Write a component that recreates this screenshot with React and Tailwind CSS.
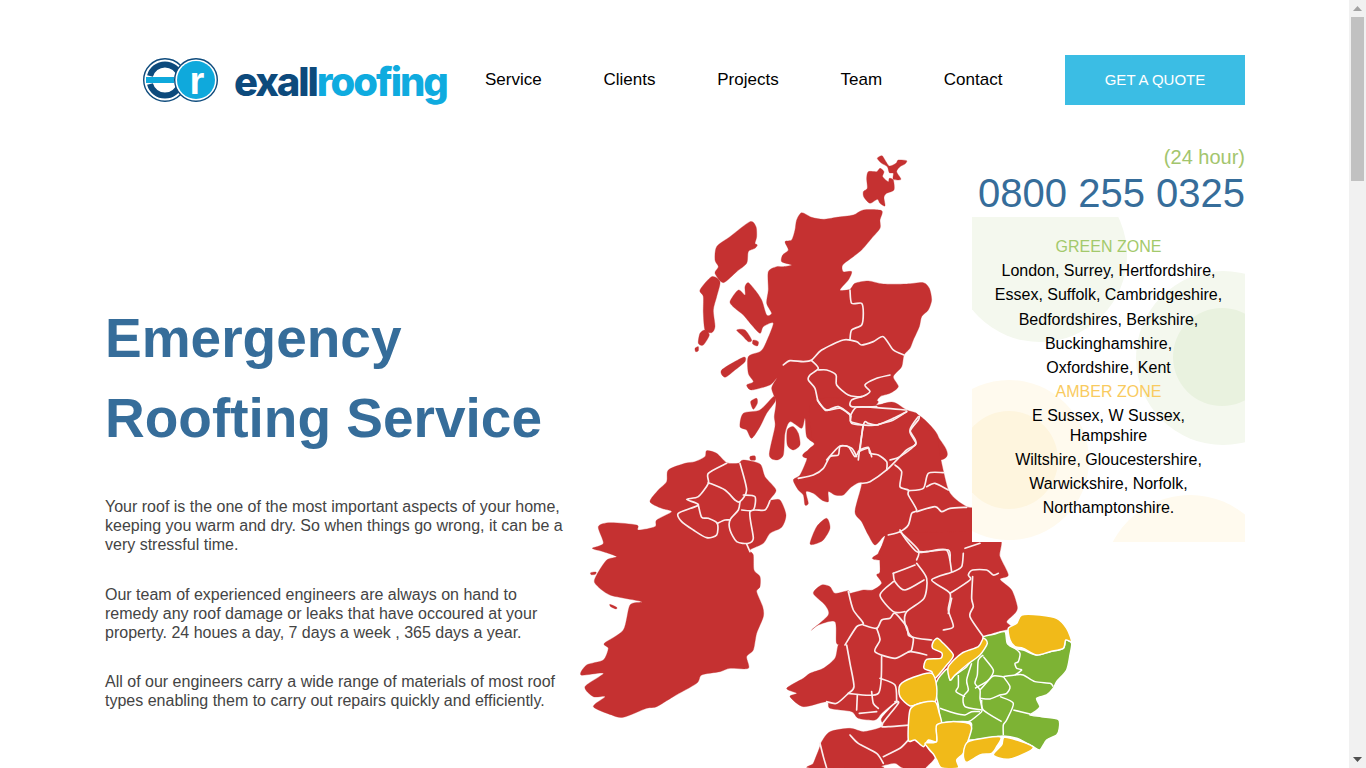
const z2 = {
  red: [
    "592,55 606,47 615,60 628,78 648,70 655,60 680,62 675,72 660,80 650,95 663,118 640,118 640,100 628,98 622,80 605,70",
    "565,95 590,95 600,85 612,95 608,110 625,125 628,115 640,120 642,150 620,160 612,172 615,198 600,190 592,178 570,190 552,172 550,155 562,145 560,115",
    "365,218 395,232 430,238 470,232 520,225 550,210 605,212 600,240 600,265 575,295 545,330 520,350 488,375 490,395 515,395 505,420 480,450 510,448 525,430 565,423 610,432 680,432 730,428 748,445 755,480 745,510 725,530 718,560 700,600 690,625 672,645 665,680 640,710 655,740 630,760 600,770 585,795 625,790 660,800 680,815 715,825 745,850 775,890 780,960 385,955 405,915 380,890 375,835 365,865 330,845 315,880 310,945 290,960 268,945 285,860 283,830 288,785 275,745 290,715 270,735 215,750 200,735 220,725 205,700 205,650 240,635 255,615 280,550 250,560 240,580 215,555 190,525 165,505 150,485 175,450 195,465 195,440 205,428 225,450 245,480 260,525 275,520 260,490 265,450 265,395 290,380 310,380 335,375 305,365 308,345 325,330 315,305 335,300 345,270 350,240",
    "110,320 150,290 210,245 228,260 230,290 225,310 232,315 225,325 205,335 200,370 170,395 130,428 105,400 115,380 105,360",
    "60,450 95,410 120,425 110,470 100,510 105,560 95,578 75,570 70,520 70,470",
    "60,580 75,570 88,585 70,615 55,610",
    "45,625 55,620 55,632 47,635",
    "170,570 195,570 215,600 205,605 185,585",
    "220,600 235,605 232,618 218,612",
    "125,690 190,652 195,665 165,690 135,712",
    "180,860 190,820 240,810 280,770 285,785 260,820 240,860 215,895 200,870",
    "212,785 230,775 232,790 220,808",
    "322,870 340,860 355,880 360,915 340,930 322,915",
  ],
  lines: [
    "510,450 515,490 545,490 550,520 545,555 515,570 510,600",
    "310,675 330,662 370,665 395,660 425,630 490,600 530,605 545,615 580,605 610,590 640,630 672,645",
    "395,662 415,685 390,705 385,720 405,745 415,785 440,810 480,805 510,825",
    "415,690 440,690 468,705 470,735 505,765 545,770 570,755 555,735 590,715 630,705",
    "545,770 515,780 515,800 590,800",
    "510,825 515,850 550,855 590,855 640,835 680,815",
    "550,855 540,920 535,960",
    "715,830 690,870 708,910 660,950 630,960",
    "440,960 480,918 515,925 530,950",
    "535,935 565,925 575,950",
  ],
};
const z7 = {
  red: [
    "95,105 100,0 285,0 285,20 320,8 345,8 380,30 410,40 420,60 440,85 470,110 478,150 485,190 505,270 530,300 560,320 600,340 600,480 295,480 295,460 310,430 322,405 310,410 285,435 265,405 245,365 225,335 245,250 215,260 190,285 165,285 145,275 145,305 125,300 100,280 78,275 85,310 75,315 70,285 55,270 40,240 60,225 80,180 85,150 105,130",
    "90,430 110,380 140,355 150,385 130,420 105,432",
  ],
  lines: [
    "55,235 100,225 130,205 150,170 175,165 180,140 205,140 225,170 240,150 265,142 270,160 295,165 320,185 320,210",
    "245,250 270,245 320,210 380,150 408,132 390,95 415,60 418,50",
    "240,150 248,85 255,65 265,70 290,75 300,72 340,60 380,35",
    "250,75 212,65 212,45 175,20 150,28 135,30 112,0",
    "212,45 230,22 280,22 380,30",
    "345,195 365,215 360,260 385,270 385,285 410,330 395,340 385,375 360,395 325,405",
    "385,272 430,265 445,220 490,218",
    "440,260 465,250 505,270",
    "410,335 465,320 485,335 510,325 560,322",
    "360,395 415,450 410,480",
    "415,455 440,455 505,450 510,480",
    "555,445 600,430",
  ],
};
const z4 = {
  red: [
    "320,10 640,10 660,80 685,135 660,148 695,180 712,230 705,250 680,275 692,295 610,330 560,500 400,520 350,515 340,520 305,550 285,570 235,565 215,545 150,535 140,515 70,530 30,500 50,490 20,475 70,445 90,430 130,415 165,385 175,345 195,345 170,340 165,275 115,285 95,300 145,255 135,225 100,190 125,165 150,170 165,190 205,182 210,190 250,180 278,180 305,160 290,135 300,125 300,70 315,20",
  ],
  lines: [
    "360,0 375,25 410,65 440,65 500,60 515,125",
    "550,70 545,110 520,125 455,150 510,190 505,240 520,290 490,300",
    "410,100 440,145 432,205 380,245 375,280 395,320 455,330",
    "340,130 405,105",
    "340,130 345,155 375,180 432,150",
    "340,155 300,195 340,245 375,245",
    "205,185 220,240 250,280 230,290 195,345",
    "250,285 290,295 305,270 330,265 345,250 380,290 385,315 400,325 395,360 385,365",
    "290,295 300,330 285,365 345,385 390,365 440,375",
    "200,345 210,400 222,470 205,490 170,520 140,515",
    "305,380 295,490 205,490",
    "300,445 345,465 350,515",
    "232,495 230,540",
    "275,485 280,520 295,535",
    "238,550 290,545",
    "345,515 355,520 305,585 325,590 390,585",
    "210,615 235,640 290,670 310,700",
    "310,680 360,655 385,630",
    "120,640 130,680 140,714",
    "510,190 570,150 565,135 578,120 620,120 640,135 655,130",
    "578,140 575,205 580,230 570,260 610,320",
    "515,205 505,250",
  ],
};
const z8 = {
  red: [
    "150,215 210,205 250,215 295,205 310,195 305,175 350,130 400,130 440,260 465,290 440,320 430,324 370,324 345,310 305,318 300,324 90,324 100,310 118,265 125,245",
  ],
};
const z3 = {
  red: [
    "410,32 440,40 470,68 505,70 520,60 570,72 585,110 618,150 600,180 630,180 648,225 635,262 600,280 580,310 540,330 550,345 552,390 570,410 570,440 560,455 578,500 580,530 560,580 550,630 530,650 535,685 480,685 450,695 395,705 380,730 310,770 260,800 230,805 160,832 125,825 70,800 105,770 70,770 45,740 100,700 33,705 50,675 100,660 115,625 103,610 160,570 180,495 215,485 120,465 75,430 80,405 110,360 140,350 100,335 67,325 100,310 85,260 120,248 200,255 205,270 255,260 260,240 305,215 275,205 240,185 265,150 290,125 295,90 345,70 375,65 405,50",
    "62,398 78,396 76,403 64,404",
    "120,493 140,502 138,507 122,500",
    "540,50 555,48 556,60 542,60",
  ],
  lines: [
    "470,70 415,100 415,130 385,170 350,178 385,195 325,220 335,245 370,270 410,293 440,285 442,250 415,235 395,232 385,195",
    "415,128 465,150 495,180 510,185 530,150 510,70",
    "510,185 505,210 480,240 480,270 500,305 535,310 550,295 540,215 585,210 600,182",
    "515,210 550,210 555,170 520,165",
    "442,250 465,240 480,240",
    "530,312 540,335",
  ],
};
const amber = [
  "365,45 420,45 470,55 500,85 515,125 497,120 490,145 450,155 410,165 370,145 345,140 330,120 325,85 350,70",
  "145,200 185,160 235,140 250,115 262,130 240,165 200,195 165,225 150,240",
  "112,115 125,125 160,165 140,195 105,235 95,215 72,205 80,178 122,175 125,158 98,145 100,125",
  "0,255 40,232 95,220 110,260 105,305 60,310 30,318 0,290",
  "30,330 60,310 105,305 118,340 125,370 110,385 110,425 85,420 70,440 45,420 25,420",
  "110,375 155,365 205,370 215,385 205,420 190,460 170,480 175,504 125,504 110,480 100,462 75,430 110,425",
  "205,425 300,410 290,440 275,460 240,465 200,487 190,465",
  "312,412 350,420 400,442 365,465 320,478 280,465 305,435",
];
const green =
  "250,110 285,102 315,95 322,130 345,145 370,150 410,165 450,155 490,145 497,120 515,130 510,165 500,210 470,245 460,265 440,285 410,295 420,320 405,335 390,345 425,350 475,358 478,385 470,405 440,420 420,450 400,440 385,432 350,415 310,408 280,412 210,420 205,410 215,375 205,365 155,365 125,368 118,340 115,315 105,265 115,235 145,205 150,240 165,225 200,200 225,165 250,130";
const greenLines = [
  "250,165 235,180 232,225 225,250 240,270 240,295 245,320 245,335 215,360 205,365",
  "250,170 280,210 270,235 240,270",
  "310,230 280,228 260,245 225,265",
  "310,230 330,260 320,280 300,285 270,297 240,295",
  "300,290 340,310 320,360 310,375 310,405",
  "245,300 250,330 305,365",
  "310,230 345,225 370,225 405,245 450,250 460,260",
  "340,330 390,342",
  "322,130 345,145 360,160 355,185 345,190 350,205 365,210 345,225",
  "215,190 200,240 205,270 190,290 195,320 245,330",
  "175,225 175,260 168,275 195,290",
  "120,325 165,340 195,345 215,335 240,335",
];

// Rounds the traced outlines a little so the coast is not angular.
function curve(str, closed) {
  const p = str.split(" ").map((s) => s.split(",").map(Number));
  const n = p.length;
  const at = (i) => (closed ? p[(i + n) % n] : p[Math.max(0, Math.min(n - 1, i))]);
  const k = 0.13;
  let d = `M${p[0][0]} ${p[0][1]}`;
  const last = closed ? n : n - 1;
  for (let i = 0; i < last; i++) {
    const a = at(i - 1), b = at(i), c = at(i + 1), e = at(i + 2);
    d += `C${b[0] + (c[0] - a[0]) * k} ${b[1] + (c[1] - a[1]) * k} ${c[0] - (e[0] - b[0]) * k} ${c[1] - (e[1] - b[1]) * k} ${c[0]} ${c[1]}`;
  }
  return closed ? d + "Z" : d;
}

function Layer({ x, y, red = [] }) {
  return (
    <g transform={`translate(${x} ${y}) scale(0.3333)`}>
      {red.map((p, i) => <path key={i} d={curve(p, true)} fill="#c53131" stroke="#c53131" strokeWidth="1" strokeLinejoin="round" />)}
    </g>
  );
}
function Lines({ x, y, lines = [] }) {
  return (
    <g transform={`translate(${x} ${y}) scale(0.3333)`}>
      {lines.map((p, i) => <path key={i} d={curve(p, false)} fill="none" stroke="#fbeeee" strokeWidth="5" strokeLinejoin="round" strokeLinecap="round" />)}
    </g>
  );
}

function UKMap() {
  return (
    <svg className="block shrink-0" width="520" height="628" viewBox="570 140 520 628">
      <Layer x={680} y={140} red={z2.red} />
      <Layer x={780} y={400} red={z7.red} />
      <Layer x={780} y={530} red={z4.red} />
      <Layer x={780} y={660} red={z8.red} />
      <Layer x={570} y={440} red={z3.red} />
      <Lines x={680} y={140} lines={z2.lines} />
      <Lines x={780} y={400} lines={z7.lines} />
      <Lines x={780} y={530} lines={z4.lines} />
      <Lines x={570} y={440} lines={z3.lines} />
      <g transform="translate(900 600) scale(0.3333)">
        <path d={curve(green, true)} fill="#7db334" stroke="#fff" strokeWidth="4.5" strokeLinejoin="round" />
        {amber.map((p, i) => <path key={i} d={curve(p, true)} fill="#f1ba19" stroke="#fff" strokeWidth="4.5" strokeLinejoin="round" />)}
        {greenLines.map((p, i) => <path key={i} d={curve(p, false)} fill="none" stroke="#fff" strokeWidth="4.5" strokeLinejoin="round" />)}
      </g>
    </svg>
  );
}

function LogoMark() {
  return (
    <svg width="78" height="50" viewBox="143 55 78 50" className="block shrink-0">
      <circle cx="165" cy="80" r="21.3" fill="#fff" stroke="#0d4a7c" strokeWidth="1.4" />
      <path d="M150 76 A15.5 15.5 0 0 1 180 76" fill="none" stroke="#0d4a7c" strokeWidth="6" />
      <path d="M150 84 A15.5 15.5 0 0 0 180 84" fill="none" stroke="#0d4a7c" strokeWidth="6" />
      <rect x="146" y="77" width="28" height="6" fill="#0fa9dc" />
      <circle cx="196" cy="80" r="21.3" fill="#fff" stroke="#0d4a7c" strokeWidth="1.4" />
      <circle cx="196" cy="80" r="19" fill="#0fa9dc" />
      <text x="197" y="94" textAnchor="middle" fontSize="38" fontWeight="700" fill="#fff" fontFamily="'Liberation Sans', sans-serif">r</text>
    </svg>
  );
}

function Zone({ children, tone }) {
  return <p className={`text-[16px] leading-[20px] mb-[4.2px] ${tone}`}>{children}</p>;
}
function Line({ children }) {
  return <p className="text-[16px] leading-[20px] mb-[4.2px] text-black">{children}</p>;
}

export default function App() {
  return (
    <div className="flex h-screen overflow-hidden bg-white font-['Liberation_Sans',Arial,sans-serif]">
      <main className="relative flex-1 min-w-0 overflow-hidden">
        <header className="flex items-center pt-[55px] pl-[143px] pr-[104px]">
          <LogoMark />
          <div className="ml-[13px] flex h-[50px] w-[213px] items-end">
            <span className="whitespace-nowrap font-['Inter',sans-serif] text-[40px] font-extrabold leading-[46px] tracking-[-2.05px]">
              <span className="text-[#0d4a7c]">exall</span>
              <span className="text-[#0fabdf]">roofing</span>
            </span>
          </div>
          <nav className="ml-[38px] flex gap-[61.8px] text-[17px] text-black">
            <a>Service</a>
            <a>Clients</a>
            <a>Projects</a>
            <a>Team</a>
            <a>Contact</a>
          </nav>
          <a className="ml-auto flex h-[50px] w-[180px] items-center justify-center bg-[#3bbde4] text-[15px] text-white">GET A QUOTE</a>
        </header>

        <section className="flex pl-[105px]">
          <div className="w-[465px] shrink-0 pt-[193px]">
            <h1 className="text-[55px] font-bold leading-[80px] text-[#366d9a]">
              Emergency
              <br />
              Roofting Service
            </h1>
            <div className="mt-[39px] w-[462px] text-[16px] leading-[19px] text-[#444444]">
              <p>Your roof is the one of the most important aspects of your home, keeping you warm and dry. So when things go wrong, it can be a very stressful time.</p>
              <p className="mt-[31px]">Our team of experienced engineers are always on hand to remedy any roof damage or leaks that have occoured at your property. 24 houes a day, 7 days a week , 365 days a year.</p>
              <p className="mt-[30px]">All of our engineers carry a wide range of materials of most roof types enabling them to carry out repairs quickly and efficiently.</p>
            </div>
          </div>
          <div className="mt-[35px]">
            <UKMap />
          </div>
        </section>

        <aside className="absolute left-[972px] top-[145px] w-[273px]">
          <p className="text-right text-[20px] leading-[24px] text-[#a3c56d]">(24 hour)</p>
          <p className="mt-[1px] text-right text-[40px] leading-[46px] text-[#366d9a]">0800 255 0325</p>
          <div className="relative mt-[1px] h-[325px] overflow-hidden bg-white px-[22px] pt-[20px] text-center">
            <div className="absolute left-[-19px] top-[-49px] h-[174px] w-[174px] rounded-full bg-[#f4f8ee]" />
            <div className="absolute left-[164px] top-[54px] h-[174px] w-[174px] rounded-full bg-[#f4f8ee]" />
            <div className="absolute left-[201px] top-[91px] h-[98px] w-[98px] rounded-full bg-[#e9f2df]" />
            <div className="absolute left-[-43px] top-[163px] h-[160px] w-[160px] rounded-full bg-[#fffaee]" />
            <div className="absolute left-[-12px] top-[194px] h-[98px] w-[98px] rounded-full bg-[#fef5de]" />
            <div className="absolute left-[131px] top-[278px] h-[174px] w-[174px] rounded-full bg-[#fffaee]" />
            <div className="relative">
              <Zone tone="text-[#a3c96b]">GREEN ZONE</Zone>
              <Line>London, Surrey, Hertfordshire,</Line>
              <Line>Essex, Suffolk, Cambridgeshire,</Line>
              <Line>Bedfordshires, Berkshire,</Line>
              <Line>Buckinghamshire,</Line>
              <Line>Oxfordshire, Kent</Line>
              <Zone tone="text-[#f9cb5f]">AMBER ZONE</Zone>
              <p className="mb-[3.6px] text-[16px] leading-[20px] text-black">E Sussex, W Sussex, Hampshire</p>
              <Line>Wiltshire, Gloucestershire,</Line>
              <Line>Warwickshire, Norfolk,</Line>
              <Line>Northamptonshire.</Line>
            </div>
          </div>
        </aside>
      </main>

      <div className="flex h-screen w-[17px] shrink-0 flex-col bg-[#f1f1f1]">
        <div className="flex h-[17px] items-center justify-center">
          <svg width="9" height="5" viewBox="0 0 9 5"><path d="M4.5 0 9 5H0z" fill="#a3a3a3" /></svg>
        </div>
        <div className="mx-[2px] h-[164px] bg-[#c1c1c1]" />
        <div className="mt-auto flex h-[17px] items-center justify-center">
          <svg width="9" height="5" viewBox="0 0 9 5"><path d="M4.5 5 9 0H0z" fill="#505050" /></svg>
        </div>
      </div>
    </div>
  );
}
